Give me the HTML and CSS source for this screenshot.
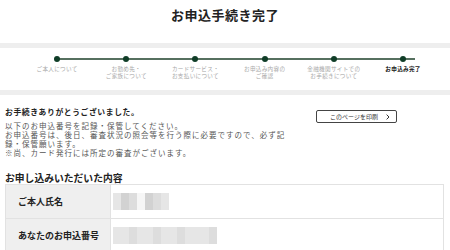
FILE: index.html
```html
<!DOCTYPE html>
<html lang="ja">
<head>
    <meta charset="UTF-8">
    <meta name="viewport" content="width=device-width, initial-scale=1.0">
    <title>お申込手続き完了</title>
    <link rel="stylesheet" href="styles.css">
</head>
<body>
    <header class="page-header">
        <h1>お申込手続き完了</h1>
    </header>

    <div class="stepper">
        <ol class="steps">
            <li class="step"><span class="dot"></span><span class="step-label">ご本人について</span></li>
            <li class="step"><span class="dot"></span><span class="step-label">お勤め先・<br>ご家族について</span></li>
            <li class="step"><span class="dot"></span><span class="step-label">カードサービス・<br>お支払いについて</span></li>
            <li class="step"><span class="dot"></span><span class="step-label">お申込み内容の<br>ご確認</span></li>
            <li class="step"><span class="dot"></span><span class="step-label">金融機関サイトでの<br>お手続きについて</span></li>
            <li class="step current"><span class="dot"></span><span class="step-label">お申込み完了</span></li>
        </ol>
    </div>

    <main class="content">
        <div class="intro">
            <div class="intro-text">
                <h2 class="thanks">お手続きありがとうございました。</h2>
                <p>以下のお申込番号を記録・保管してください。<br>お申込番号は、後日、審査状況の照会等を行う際に必要ですので、必ず記録・保管願います。<br>※尚、カード発行には所定の審査がございます。</p>
            </div>
            <button class="print-btn" type="button">
                <span>このページを印刷</span>
                <svg class="chev" width="4" height="6" viewBox="0 0 4 6"><path d="M0.6 0.6 L3 3 L0.6 5.4" fill="none" stroke="#333" stroke-width="1"/></svg>
            </button>
        </div>

        <h3 class="section-title">お申し込みいただいた内容</h3>
        <table class="summary">
            <tr>
                <th>ご本人氏名</th>
                <td>
                    <div class="blur">
                        <i class="px a"></i><i class="px b"></i><i class="px c"></i><i class="px gap"></i><i class="px b"></i><i class="px c"></i><i class="px a"></i>
                    </div>
                </td>
            </tr>
            <tr>
                <th>あなたのお申込番号</th>
                <td>
                    <div class="blur">
                        <i class="px a"></i><i class="px a"></i><i class="px c"></i><i class="px a"></i><i class="px a"></i><i class="px c"></i><i class="px a"></i><i class="px a"></i><i class="px c"></i><i class="px a"></i><i class="px a"></i><i class="px a"></i><i class="px c"></i>
                    </div>
                </td>
            </tr>
        </table>
    </main>
</body>
</html>
```

FILE: styles.css
```css
:root {
    --band-color: #eeeeee;
    --text-color: #333333;
    --muted-color: #a8a8a8;
    --step-color: #0f3d27;
    --line-color: #56705f;
    --border-color: #e2e2e2;
}
* {
    box-sizing: border-box;
}
body {
    margin: 0;
    font-family: "Noto Sans CJK JP", "Noto Sans", sans-serif;
    color: var(--text-color);
    background-color: #ffffff;
}
.page-header {
    height: 43px;
    padding-top: 8px;
    text-align: center;
}
.page-header h1 {
    margin: 0;
    font-size: 13px;
    line-height: 14px;
    font-weight: bold;
    letter-spacing: 0.5px;
    color: #222222;
}
.stepper {
    height: 52px;
    border-top: 5px solid var(--band-color);
    border-bottom: 5px solid var(--band-color);
}
.steps {
    position: relative;
    display: grid;
    grid-template-columns: repeat(6, 69.2px);
    margin: 0 0 0 22.5px;
    padding: 0;
    list-style: none;
}
.steps::before {
    content: "";
    position: absolute;
    top: 10px;
    left: 34.6px;
    right: 34.6px;
    height: 2px;
    background-color: var(--line-color);
}
.step {
    display: flex;
    flex-direction: column;
    align-items: center;
}
.dot {
    position: relative;
    width: 6px;
    height: 6px;
    margin-top: 8px;
    border-radius: 50%;
    background-color: var(--step-color);
}
.step-label {
    margin-top: 4px;
    font-size: 5.6px;
    line-height: 7px;
    letter-spacing: 0.3px;
    text-align: center;
    color: var(--muted-color);
    white-space: nowrap;
}
.step.current .step-label {
    color: #222222;
    font-weight: bold;
}
.content {
    padding: 12px 6px 0 5px;
}
.intro {
    display: flex;
    align-items: flex-start;
    gap: 21px;
}
.intro-text {
    width: 290px;
    flex-shrink: 0;
}
.thanks {
    margin: 0 0 5px;
    font-size: 7.8px;
    line-height: 9px;
    letter-spacing: 0.6px;
    font-weight: bold;
    color: #222222;
}
.intro-text p {
    width: 282px;
    margin: 0;
    font-size: 7.5px;
    line-height: 9px;
    letter-spacing: 1px;
    color: #555555;
}
.print-btn {
    display: flex;
    align-items: center;
    width: 81px;
    height: 13px;
    margin-top: 3px;
    padding: 0 6px 0 13px;
    border: 1px solid #444444;
    border-radius: 2px;
    background-color: #ffffff;
    font-family: inherit;
    font-size: 6px;
    line-height: 1;
    color: #333333;
    cursor: pointer;
}
.print-btn .chev {
    margin-left: auto;
}
.section-title {
    margin: 15px 0 0;
    font-size: 9.8px;
    line-height: 12px;
    font-weight: bold;
    color: #222222;
}
.summary {
    width: 439px;
    border-collapse: collapse;
}
.summary th,
.summary td {
    height: 34px;
    border: 1px solid var(--border-color);
    padding: 0;
}
.summary th {
    width: 105px;
    padding-left: 12px;
    text-align: left;
    font-size: 9px;
    font-weight: bold;
    color: #222222;
    background-color: #efefef;
}
.blur {
    display: flex;
    height: 17px;
    margin-left: 2px;
}
.px {
    width: 8px;
    height: 100%;
    background-color: #e9e9e9;
}
.px.a {
    background-color: #e6e6e6;
}
.px.b {
    background-color: #d2d2d2;
}
.px.c {
    background-color: #dddddd;
}
.px.gap {
    background-color: #f6f6f6;
}
```
